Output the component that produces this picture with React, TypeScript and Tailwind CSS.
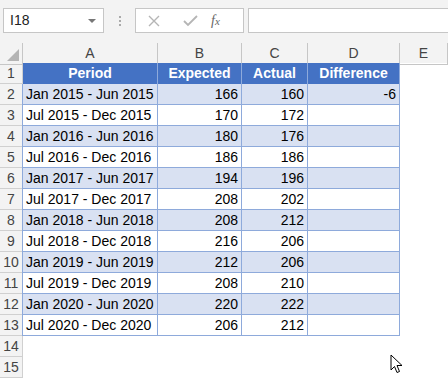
import React from 'react';

const rows = [
  ['Jan 2015 - Jun 2015', '166', '160', '-6'],
  ['Jul 2015 - Dec 2015', '170', '172', ''],
  ['Jan 2016 - Jun 2016', '180', '176', ''],
  ['Jul 2016 - Dec 2016', '186', '186', ''],
  ['Jan 2017 - Jun 2017', '194', '196', ''],
  ['Jul 2017 - Dec 2017', '208', '202', ''],
  ['Jan 2018 - Jun 2018', '208', '212', ''],
  ['Jul 2018 - Dec 2018', '216', '206', ''],
  ['Jan 2019 - Jun 2019', '212', '206', ''],
  ['Jul 2019 - Dec 2019', '208', '210', ''],
  ['Jan 2020 - Jun 2020', '220', '222', ''],
  ['Jul 2020 - Dec 2020', '206', '212', ''],
];

const cols = 'grid grid-cols-[23px_135px_84px_66px_92px_48px]';

const RowHead = ({ n }: { n: number }) => (
  <div className="h-[21px] bg-[#f3f3f3] border-r border-b border-[#d0d0d0] flex items-center justify-center text-[#444] text-[14px]">
    {n}
  </div>
);

const App = () => {
  return (
    <div className="w-[448px] h-[378px] overflow-hidden bg-white relative font-['Liberation_Sans',Arial,sans-serif] text-[14px] text-black">
      {/* Formula bar */}
      <div className="h-[43px] bg-[#f3f3f3] flex items-start pt-[8px] pl-[3px]">
        <div className="w-[101px] h-[25px] bg-white border border-[#c6c6c6] flex items-center justify-between pl-[6px] pr-[7px]">
          <span className="text-[14px] text-[#222]">I18</span>
          <span className="w-0 h-0 border-l-[4px] border-r-[4px] border-t-[4px] border-l-transparent border-r-transparent border-t-[#777]" />
        </div>
        <div className="w-[31px] h-[25px] flex flex-col items-center justify-center gap-[2px]">
          <span className="w-[2px] h-[2px] bg-[#aaa]" />
          <span className="w-[2px] h-[2px] bg-[#aaa]" />
          <span className="w-[2px] h-[2px] bg-[#aaa]" />
        </div>
        <div className="w-[109px] h-[25px] bg-white border border-[#c6c6c6] flex items-center">
          <svg width="36" height="23" viewBox="0 0 36 23" className="ml-[0px]">
            <path d="M13 7 L23 17 M23 7 L13 17" stroke="#b5b5b5" strokeWidth="1.4" fill="none" />
          </svg>
          <svg width="36" height="23" viewBox="0 0 36 23">
            <path d="M12 12 L16 16 L25 7" stroke="#b5b5b5" strokeWidth="1.8" fill="none" />
          </svg>
          <span className="ml-[3px] font-['Liberation_Serif',serif] italic text-[14px] text-[#666]">
            f<span className="text-[11px]">x</span>
          </span>
        </div>
        <div className="ml-[4px] flex-1 h-[25px] bg-white border border-[#c6c6c6] border-r-0" />
      </div>

      {/* Column headers */}
      <div className={`${cols} h-[20px] bg-[#f3f3f3]`}>
        <div className="relative border-r border-b border-[#c6c6c6] bg-[#f3f3f3]">
          <span className="absolute right-[3px] bottom-[3px] w-0 h-0 border-l-[12px] border-t-[12px] border-l-transparent border-t-transparent border-b-0 border-r-0 border-[#b4b4b4]" style={{ borderRightWidth: 0 }} />
          <svg className="absolute right-[3px] bottom-[3px]" width="12" height="12" viewBox="0 0 12 12">
            <path d="M12 0 L12 12 L0 12 Z" fill="#b4b4b4" />
          </svg>
        </div>
        {['A', 'B', 'C', 'D', 'E'].map(c => (
          <div key={c} className="border-r border-b border-[#c6c6c6] flex items-center justify-center text-[#444] text-[14px]">
            {c}
          </div>
        ))}
      </div>

      {/* Header row */}
      <div className={cols}>
        <RowHead n={1} />
        {['Period', 'Expected', 'Actual', 'Difference'].map(h => (
          <div key={h} className="h-[21px] bg-[#4472c4] border-r border-[#8eaadb] flex items-center justify-center text-white font-bold">
            {h}
          </div>
        ))}
        <div />
      </div>

      {/* Data rows */}
      {rows.map((r, i) => {
        const band = i % 2 === 0 ? 'bg-[#d9e1f2]' : 'bg-white';
        return (
          <div key={i} className={cols}>
            <RowHead n={i + 2} />
            <div className={`h-[21px] ${band} border-l border-r border-b border-[#8eaadb] -ml-px flex items-center pl-[3px]`}>
              {r[0]}
            </div>
            <div className={`h-[21px] ${band} border-r border-b border-[#8eaadb] flex items-center justify-end pr-[3px]`}>
              {r[1]}
            </div>
            <div className={`h-[21px] ${band} border-r border-b border-[#8eaadb] flex items-center justify-end pr-[3px]`}>
              {r[2]}
            </div>
            <div className={`h-[21px] ${band} border-r border-b border-[#8eaadb] flex items-center justify-end pr-[3px]`}>
              {r[3]}
            </div>
            <div />
          </div>
        );
      })}

      <div className={cols}>
        <RowHead n={14} />
      </div>
      <div className={cols}>
        <RowHead n={15} />
      </div>

      {/* Mouse cursor */}
      <svg className="absolute left-[390px] top-[354px]" width="14" height="21" viewBox="0 0 14 21">
        <path d="M1 1 L1 16 L4.5 12.5 L7 18.5 L9.5 17.5 L7 11.5 L12 11.5 Z" fill="white" stroke="black" strokeWidth="1" strokeLinejoin="round" />
      </svg>
    </div>
  );
};

export default App;
